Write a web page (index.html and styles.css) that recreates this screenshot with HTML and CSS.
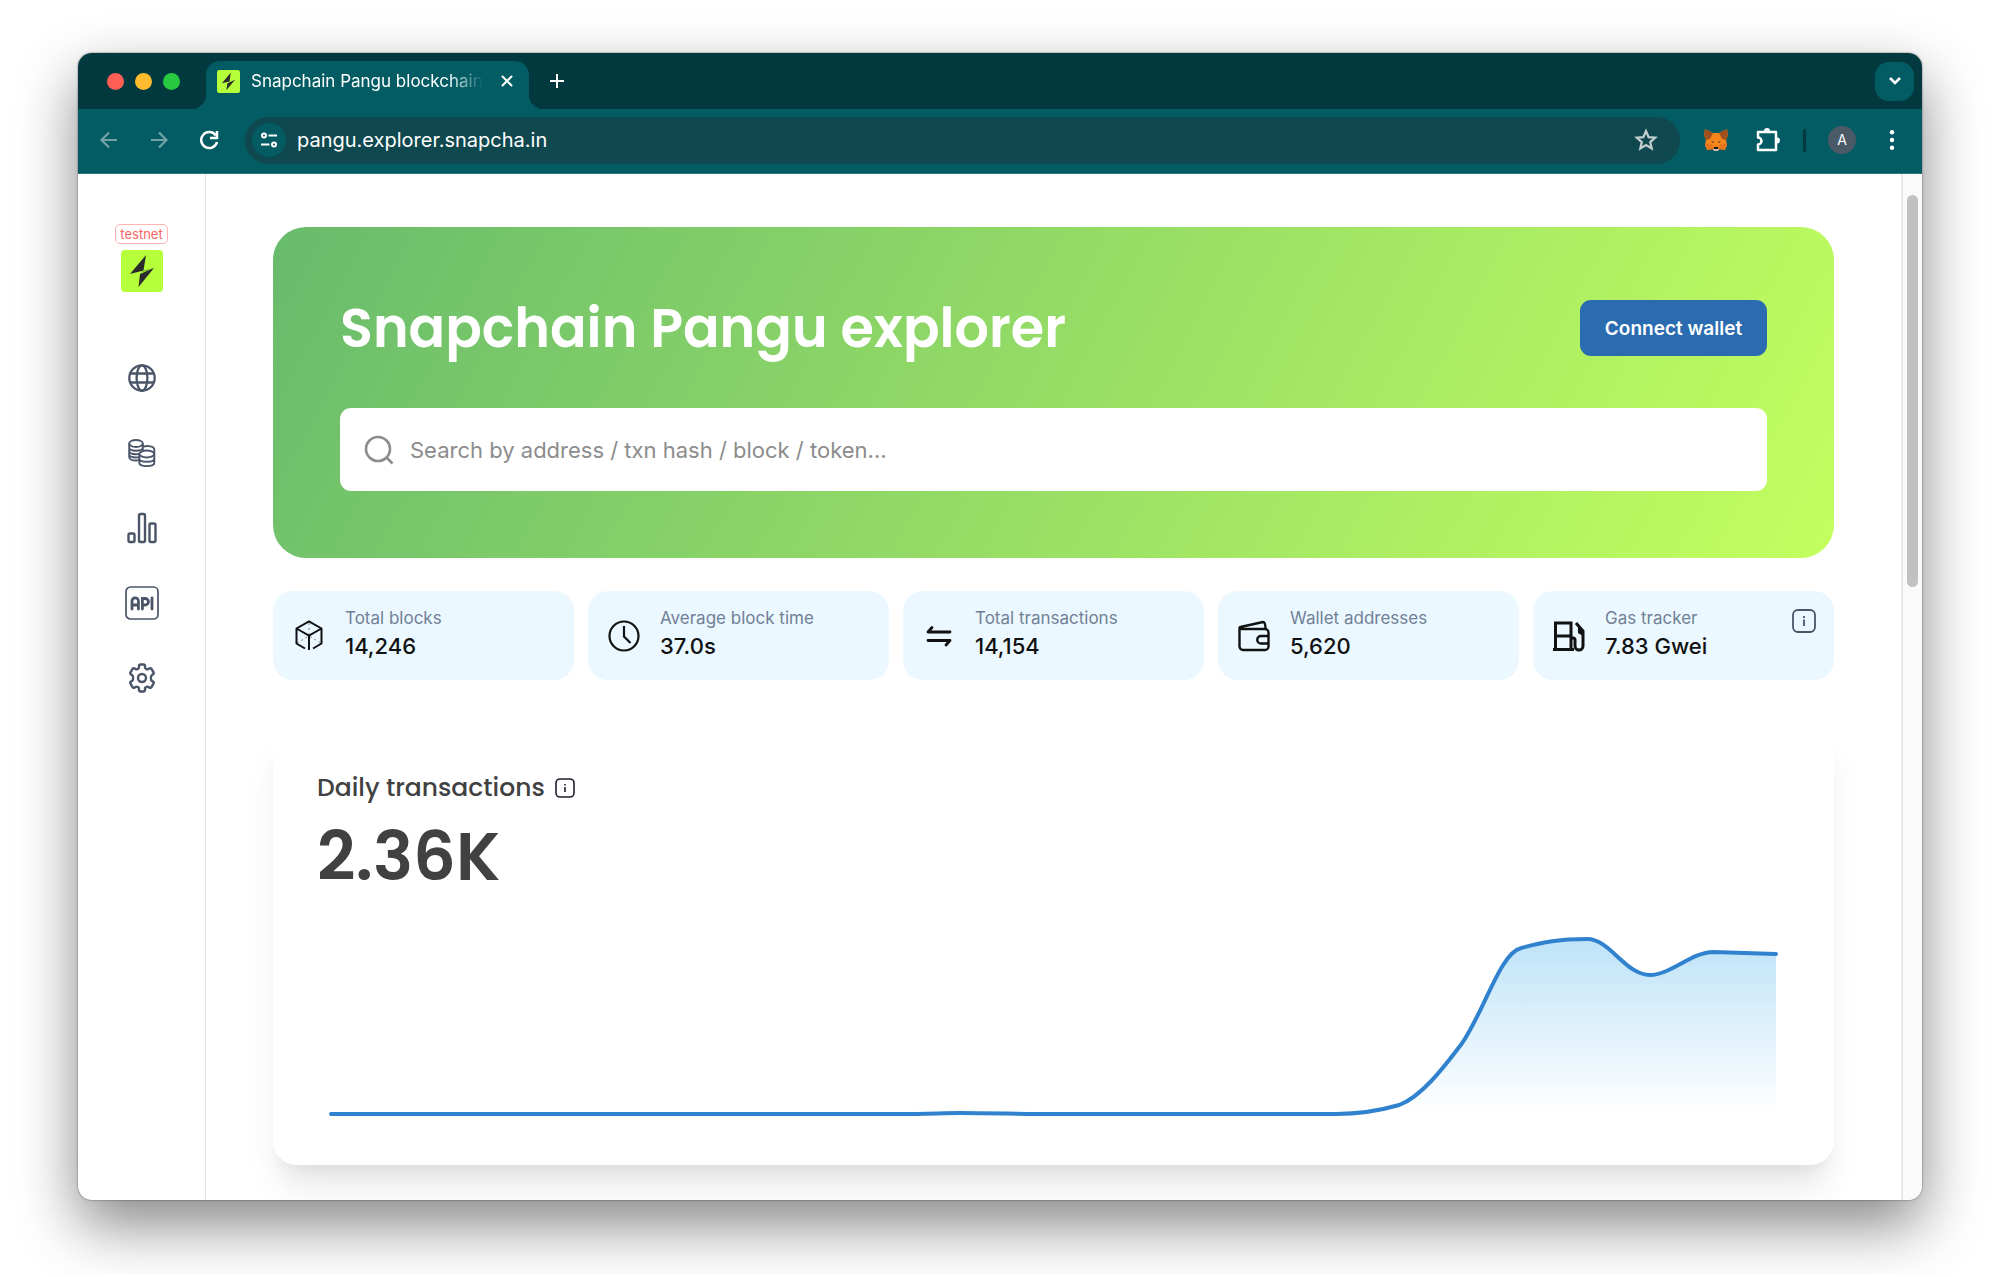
FILE: index.html
```html
<!DOCTYPE html>
<html lang="en">
<head>
    <meta charset="UTF-8">
    <meta name="viewport" content="width=device-width, initial-scale=1.0">
    <title>Snapchain Pangu blockchain explorer</title>
    <link rel="stylesheet" href="styles.css">
</head>
<body>
    <div class="window">
        <header class="tabs">
            <div class="lights">
                <span class="light red"></span>
                <span class="light yellow"></span>
                <span class="light green"></span>
            </div>
            <div class="tab">
                <svg class="favicon" viewBox="0 0 42 42"><rect width="42" height="42" rx="4" fill="#b6ff3b"/><path d="M25 5 9 24l14-3zM33 18 17 37l2-13z" fill="#2b2b2b"/></svg>
                <span class="tab-title">Snapchain Pangu blockchain explorer</span>
                <button class="tab-close" aria-label="Close tab">
                    <svg width="12" height="12" viewBox="0 0 12 12"><path d="M1.500 1.500l9 9M10.500 1.500l-9 9" stroke="#fff" stroke-width="2" stroke-linecap="round"/></svg>
                </button>
            </div>
            <button class="new-tab" aria-label="New tab">
                <svg width="16" height="16" viewBox="0 0 16 16"><path d="M8 1v14M1 8h14" stroke="#fff" stroke-width="2"/></svg>
            </button>
            <button class="tab-search" aria-label="Search tabs">
                <svg width="14" height="10" viewBox="0 0 14 10"><path d="M2 2l5 5 5-5" fill="none" stroke="#fff" stroke-width="2.500"/></svg>
            </button>
        </header>

        <div class="toolbar">
            <div class="nav-buttons">
                <button class="dim" aria-label="Back">
                    <svg width="18" height="18" viewBox="0 0 18 18"><path d="M17 9H2M9 1.500L1.500 9 9 16.500" fill="none" stroke="currentColor" stroke-width="2.200"/></svg>
                </button>
                <button class="dim" aria-label="Forward">
                    <svg width="18" height="18" viewBox="0 0 18 18"><path d="M1 9h15M9 1.500L16.500 9 9 16.500" fill="none" stroke="currentColor" stroke-width="2.200"/></svg>
                </button>
                <button aria-label="Reload">
                    <svg width="20" height="20" viewBox="0 0 20 20"><path d="M16.800 5.500A8 8 0 1 0 18 12" fill="none" stroke="currentColor" stroke-width="2.500"/><path d="M18 1v7h-7" fill="none" stroke="currentColor" stroke-width="2.500"/></svg>
                </button>
            </div>
            <div class="omnibox">
                <span class="site-info">
                    <svg width="18" height="18" viewBox="0 0 18 18" fill="none" stroke="#fff" stroke-width="2"><circle cx="4" cy="4.500" r="2"/><path d="M8.500 4.500H17M1 13.500h8.500"/><circle cx="14" cy="13.500" r="2"/></svg>
                </span>
                <input class="url" type="text" value="pangu.explorer.snapcha.in" aria-label="Address">
                <button class="star" aria-label="Bookmark">
                    <svg width="24" height="24" viewBox="0 0 24 24"><path d="M12 3l2.600 6.100 6.600.600-5 4.400 1.500 6.400L12 17.100l-5.700 3.400 1.500-6.400-5-4.400 6.600-.600z" fill="none" stroke="#c5cdcf" stroke-width="2.200"/></svg>
                </button>
            </div>
            <div class="extensions">
                <svg class="fox" viewBox="0 0 24 24">
                    <path d="M1 1l8 4h6l8-4 1 6-2 5 1 5-2 5-5-1-3 2h-2l-3-2-5 1-2-5 1-5-2-5z" fill="#f6851b"/>
                    <path d="M1 1l8 4-3 6-4 1-2-5zM23 1l-8 4 3 6 4 1 2-5z" fill="#a0501c"/>
                    <path d="M1 16h7l2 5-6 1-3-4zM23 16h-7l-2 5 6 1 3-4z" fill="#e4761b"/>
                    <path d="M7 13l3 1-1 1zM17 13l-3 1 1 1z" fill="#233447"/>
                    <path d="M9 21h6l-1 2h-4z" fill="#d7c1b3"/><path d="M10 19h4v2h-4z" fill="#161616"/>
                </svg>
                <svg class="puzzle" viewBox="0 0 26 26">
                    <path d="M3 5h18v18H3v-5.500a3.500 3.500 0 0 0 0-7z" fill="none" stroke="#fff" stroke-width="2.500" stroke-linejoin="round"/>
                    <path d="M9 4a3 3 0 0 1 6 0zM22 10.500a3 3 0 0 1 0 6z" fill="#fff"/>
                </svg>
                <span class="divider"></span>
                <span class="avatar">A</span>
                <button class="menu" aria-label="Menu">
                    <svg width="6" height="20" viewBox="0 0 6 20" fill="#fff"><circle cx="3" cy="2.300" r="2.200"/><circle cx="3" cy="10" r="2.200"/><circle cx="3" cy="17.700" r="2.200"/></svg>
                </button>
            </div>
        </div>

        <div class="page">
            <nav class="sidebar">
                <span class="network">testnet</span>
                <a href="#" class="logo" aria-label="Snapchain">
                    <svg viewBox="0 0 42 42"><rect width="42" height="42" rx="4" fill="#b6ff3b"/><path d="M25 5 9 24l13.500-3.500zM33 18l-13.500 4.500L24 20.500zM33 18 17.500 37l1.500-13z" fill="#2b2b2b"/></svg>
                </a>
                <ul>
                    <li><a href="#" aria-label="Blockchain">
                        <svg width="28" height="28" viewBox="0 0 28 28" fill="none" stroke="currentColor" stroke-width="2.300"><circle cx="14" cy="14" r="12.700"/><ellipse cx="14" cy="14" rx="5.400" ry="12.700"/><path d="M2.500 9.500h23M2.500 18.500h23"/></svg>
                    </a></li>
                    <li><a href="#" aria-label="Tokens">
                        <svg width="28" height="28" viewBox="0 0 28 28" fill="none" stroke="currentColor" stroke-width="1.900"><ellipse cx="8" cy="4.500" rx="6.800" ry="3.500"/><path d="M1.200 4.500v13.700c0 2 3.200 3.300 6.800 3.300 1.200 0 2-.100 3.200-.400M14.800 4.500v8M1.200 8.500c0 2 3.200 3.200 6.800 3.200s6.800-1.200 6.800-3.200M1.200 12c0 2 3.200 3.200 6.800 3.200 1.200 0 2.500-.200 3.600-.600M1.200 15.300c0 2 3.200 3.200 6.800 3.200 1.200 0 2-.100 3-.400M14.800 7.800c5-1.600 11.500-.500 11.500 2.400v5"/><ellipse cx="18.800" cy="15" rx="7.500" ry="3.500"/><path d="M11.300 15v8.800c0 2 3.200 3.300 7.500 3.300s7.500-1.300 7.500-3.300V15M11.300 19.400c0 2 3.200 3.300 7.500 3.300s7.500-1.300 7.500-3.300"/></svg>
                    </a></li>
                    <li><a href="#" aria-label="Charts">
                        <svg width="30" height="32" viewBox="0 0 30 32" fill="none" stroke="currentColor" stroke-width="2.400"><rect x="1.500" y="21.500" width="6" height="8.500" rx="1.500"/><rect x="12" y="2" width="6" height="28" rx="1.500"/><rect x="22.500" y="11.500" width="6" height="18.500" rx="1.500"/></svg>
                    </a></li>
                    <li><a href="#" aria-label="API">
                        <svg width="34" height="34" viewBox="0 0 34 34" fill="none" stroke="currentColor" stroke-width="1.700"><rect x="1" y="1" width="32" height="32" rx="4.500"/><path d="M7 23v-8a3.200 3.200 0 0 1 6.400 0v8M7 19h6.400M17.400 23V12.500h2.800a3 3 0 0 1 0 6.500h-2.800M27 12V23" stroke-width="2.800" stroke-linecap="round"/></svg>
                    </a></li>
                    <li><a href="#" aria-label="Settings">
                        <svg width="28" height="30" viewBox="0 0 28 30" fill="none" stroke="currentColor" stroke-width="2.400" stroke-linejoin="round"><path d="M12.500 1.500h3a1.500 1.500 0 0 1 1.500 1.500v1.500c0 1 2 2.200 3 1.700l1.500-.800a1.500 1.500 0 0 1 2 .500l2 3.500a1.500 1.500 0 0 1-.500 2l-1 .600c-1.500.900-1.500 5.100 0 6l1 .600a1.500 1.500 0 0 1 .500 2l-2 3.500a1.500 1.500 0 0 1-2 .500l-1.500-.800c-1-.500-3 .700-3 1.700v1.500a1.500 1.500 0 0 1-1.500 1.500h-3a1.500 1.500 0 0 1-1.500-1.500v-1.500c0-1-2-2.200-3-1.700l-1.500.800a1.500 1.500 0 0 1-2-.500l-2-3.500a1.500 1.500 0 0 1 .500-2l1-.600c1.500-.900 1.500-5.100 0-6l-1-.600a1.500 1.500 0 0 1-.500-2l2-3.500a1.500 1.500 0 0 1 2-.500l1.500.800c1 .500 3-.700 3-1.700V3a1.500 1.500 0 0 1 1.500-1.500z"/><circle cx="14" cy="15" r="4"/></svg>
                    </a></li>
                </ul>
            </nav>

            <main>
                <section class="hero">
                    <div class="hero-top">
                        <h1>Snapchain Pangu explorer</h1>
                        <button class="connect">Connect wallet</button>
                    </div>
                    <label class="search">
                        <svg width="30" height="30" viewBox="0 0 30 30" fill="none" stroke="#8c8c8c" stroke-width="2.600"><circle cx="14" cy="14" r="12"/><path d="M22.500 22.500l6 6"/></svg>
                        <input type="text" placeholder="Search by address / txn hash / block / token..." aria-label="Search">
                    </label>
                </section>

                <section class="stats">
                    <div class="stat">
                        <svg width="36" height="36" viewBox="0 0 36 36" fill="none" stroke="#101112" stroke-width="2"><path d="M14 30.500 5.500 25.500V10.500L18 3.500l12.500 7v15l-8.500 5M5.500 10.500 18 17.500l12.500-7M18 17.500V32"/><path d="M18 5v12M6 25l12-7 12 7" stroke-width="1" stroke-dasharray="2 3" opacity=".5"/></svg>
                        <div><span class="label">Total blocks</span><span class="value">14,246</span></div>
                    </div>
                    <div class="stat">
                        <svg width="36" height="36" viewBox="0 0 36 36" fill="none" stroke="#101112" stroke-width="2.200"><circle cx="18" cy="18" r="14.500"/><path d="M18 8v10.500l6.500 6.500"/></svg>
                        <div><span class="label">Average block time</span><span class="value">37.0s</span></div>
                    </div>
                    <div class="stat">
                        <svg width="36" height="36" viewBox="0 0 36 36" fill="none" stroke="#101112" stroke-width="2.800" stroke-linejoin="round" stroke-linecap="round"><path d="M29 14H7l4-4.500M7 22.500h22l-4 4.500"/></svg>
                        <div><span class="label">Total transactions</span><span class="value">14,154</span></div>
                    </div>
                    <div class="stat">
                        <svg width="36" height="36" viewBox="0 0 36 36" fill="none" stroke="#101112" stroke-width="2.400" stroke-linejoin="round"><path d="M3.500 10v18.500a3.500 3.500 0 0 0 3.500 3.500h22a3.500 3.500 0 0 0 3.500-3.500V14.500a3.500 3.500 0 0 0-3.500-3.500H4.500a1 1 0 0 1 0-2L27 4q2.500 0 2.500 7"/><path d="M32.500 18H25a3.500 3.500 0 0 0 0 7.500h7.500"/></svg>
                        <div><span class="label">Wallet addresses</span><span class="value">5,620</span></div>
                    </div>
                    <div class="stat">
                        <svg width="36" height="36" viewBox="0 0 36 36" fill="none" stroke="#101112" stroke-width="3"><path d="M4.500 32V5H20v27M2 31.500h21M5 18h15M20 20h2a2 2 0 0 1 2 2v6a3.500 3.500 0 0 0 8 0V13l-7-8"/><path d="M25 5l7 7v6l-5-3v-6z" fill="#101112" stroke="none"/></svg>
                        <div><span class="label">Gas tracker</span><span class="value">7.83 Gwei</span></div>
                        <button class="info" aria-label="Gas details">
                            <svg width="24" height="24" viewBox="0 0 24 24" fill="none" stroke="#4a5568" stroke-width="1.800"><rect x="1" y="1" width="22" height="22" rx="5"/><path d="M12 10.500V17M12 7v2"/></svg>
                        </button>
                    </div>
                </section>

                <section class="card">
                    <h2>Daily transactions
                        <svg width="20" height="20" viewBox="0 0 20 20" fill="none" stroke="#1a202c" stroke-width="1.600"><rect x="1" y="1" width="18" height="18" rx="4"/><path d="M10 9v5M10 6v1.500"/></svg>
                    </h2>
                    <p class="total">2.36K</p>
                    <svg class="chart" viewBox="0 0 1446 190" preserveAspectRatio="none">
                        <defs>
                            <linearGradient id="fill" x1="0" y1="0" x2="0" y2="1">
                                <stop offset="0" stop-color="#bee3f8"/>
                                <stop offset="1" stop-color="#bee3f8" stop-opacity="0"/>
                            </linearGradient>
                        </defs>
                        <path fill="url(#fill)" d="M0 183H1006C1030 183 1048 180 1069 174C1090 166 1111 140 1132 112C1155 78 1170 22 1191 17C1213 11 1230 8 1257 8C1280 8 1295 44 1320 44C1340 44 1362 21 1383 21L1446 23V178H0z"/>
                        <path class="line" d="M0 183H566C600 183 610 182 629 182C660 182 690 183 720 183H1006C1030 183 1048 180 1069 174C1090 166 1111 140 1132 112C1155 78 1170 22 1191 17C1213 11 1230 8 1257 8C1280 8 1295 44 1320 44C1340 44 1362 21 1383 21L1446 23"/>
                    </svg>
                </section>
            </main>

            <div class="scrollbar"><div class="thumb"></div></div>
        </div>
    </div>
</body>
</html>
```

FILE: styles.css
```css
* {
    box-sizing: border-box;
}
body {
    margin: 0;
    padding: 53px 78px 75px;
    background-color: #fff;
    font-family: Inter, "Liberation Sans", sans-serif;
    color: #101112;
}
button {
    display: flex;
    align-items: center;
    justify-content: center;
    padding: 0;
    border: none;
    background: none;
    color: #fff;
    font-family: inherit;
    cursor: pointer;
}
svg {
    display: block;
    flex-shrink: 0;
}
.window {
    border-radius: 14px;
    overflow: hidden;
    background-color: #fff;
    box-shadow: 0 0 2px rgba(0, 0, 0, 0.6), 0 25px 60px rgba(0, 0, 0, 0.48);
}

/* tab strip */
.tabs {
    display: flex;
    align-items: center;
    height: 56px;
    padding: 0 8px 0 29px;
    background-color: #02393e;
}
.lights {
    display: flex;
    gap: 11px;
    margin-right: 26px;
}
.light {
    width: 17px;
    height: 17px;
    border-radius: 50%;
}
.red {
    background-color: #ff5f57;
}
.yellow {
    background-color: #febc2e;
}
.green {
    background-color: #28c840;
}
.tab {
    position: relative;
    align-self: flex-end;
    display: flex;
    align-items: center;
    width: 323px;
    height: 48px;
    padding: 0 14px 8px 11px;
    border-radius: 14px 14px 0 0;
    background-color: #035c63;
}
.tab::before,
.tab::after {
    content: "";
    position: absolute;
    bottom: 0;
    width: 14px;
    height: 14px;
}
.tab::before {
    left: -14px;
    background: radial-gradient(circle at 0 0, transparent 14px, #035c63 14px);
}
.tab::after {
    right: -14px;
    background: radial-gradient(circle at 100% 0, transparent 14px, #035c63 14px);
}
.favicon {
    width: 23px;
    height: 23px;
}
.tab-title {
    flex: 1;
    margin: 0 16px 0 11px;
    overflow: hidden;
    white-space: nowrap;
    font-size: 17px;
    color: #fff;
    -webkit-mask-image: linear-gradient(to right, #000 85%, transparent);
    mask-image: linear-gradient(to right, #000 85%, transparent);
}
.tab-close {
    width: 16px;
    height: 16px;
}
.new-tab {
    width: 24px;
    height: 24px;
    margin-left: 16px;
}
.tab-search {
    width: 39px;
    height: 39px;
    margin-left: auto;
    border-radius: 14px;
    background-color: #035c63;
}

/* toolbar */
.toolbar {
    display: flex;
    align-items: center;
    height: 65px;
    padding: 0 18px 2px 20px;
    border-bottom: 1px solid #2f7479;
    background-color: #035c63;
}
.nav-buttons {
    display: flex;
    gap: 28px;
    margin-right: 25px;
}
.nav-buttons button {
    width: 22px;
    height: 22px;
}
.nav-buttons .dim {
    color: #74a3a7;
}
.omnibox {
    flex: 1;
    display: flex;
    align-items: center;
    height: 47px;
    padding: 0 22px 0 7px;
    border-radius: 24px;
    background-color: #0f484e;
}
.site-info {
    display: flex;
    align-items: center;
    justify-content: center;
    width: 34px;
    height: 34px;
    margin-right: 11px;
    border-radius: 50%;
    background-color: #035c63;
}
.url {
    flex: 1;
    padding: 0;
    border: none;
    outline: none;
    background: none;
    color: #fff;
    font-family: inherit;
    font-size: 20px;
}
.extensions {
    display: flex;
    align-items: center;
    margin-left: 24px;
}
.fox {
    width: 24px;
    height: 24px;
}
.puzzle {
    width: 26px;
    height: 26px;
    margin-left: 27px;
}
.divider {
    width: 3px;
    height: 23px;
    margin: 0 22px;
    border-radius: 2px;
    background-color: #02393e;
}
.avatar {
    width: 28px;
    height: 28px;
    border-radius: 50%;
    background-color: #4a5a66;
    color: #fff;
    font-size: 14px;
    line-height: 28px;
    text-align: center;
}
.menu {
    width: 24px;
    height: 24px;
    margin-left: 24px;
}

/* page */
.page {
    display: flex;
}
.sidebar {
    display: flex;
    flex-direction: column;
    align-items: center;
    width: 128px;
    padding-top: 50px;
    border-right: 1px solid #e2e2e2;
}
.network {
    height: 20px;
    padding: 0 4px;
    border: 1px solid #feb2b2;
    border-radius: 5px;
    color: #f56565;
    font-size: 13px;
    line-height: 18px;
}
.logo {
    width: 42px;
    margin-top: 6px;
}
.sidebar ul {
    margin: 48px 0 0;
    padding: 0;
    list-style: none;
}
.sidebar li a {
    display: flex;
    align-items: center;
    justify-content: center;
    width: 48px;
    height: 75px;
    color: #4a5568;
}
main {
    flex: 1;
    padding: 53px 67px 35px;
}
.hero {
    padding: 67px;
    border-radius: 33px;
    background: linear-gradient(118deg, #68bb6c 0%, #c4ff5f 100%);
}
.hero-top {
    display: flex;
    align-items: center;
    justify-content: space-between;
    height: 68px;
    margin-bottom: 46px;
}
h1 {
    margin: 0;
    color: #fff;
    font-family: Poppins, Inter, sans-serif;
    font-size: 54px;
    font-weight: 600;
}
.connect {
    width: 187px;
    height: 56px;
    border-radius: 11px;
    background-color: #2b6cb0;
    font-size: 19px;
    font-weight: 600;
}
.search {
    display: flex;
    align-items: center;
    height: 83px;
    padding: 0 24px;
    border-radius: 11px;
    background-color: #fff;
}
.search input {
    flex: 1;
    margin-left: 16px;
    padding: 0;
    border: none;
    outline: none;
    font-family: inherit;
    font-size: 22px;
}
.search input::placeholder {
    color: #8c8c8c;
}
.stats {
    display: grid;
    grid-template-columns: repeat(5, 1fr);
    gap: 14px;
    margin-top: 33px;
}
.stat {
    position: relative;
    display: flex;
    align-items: center;
    gap: 18px;
    height: 89px;
    padding: 0 18px;
    border-radius: 20px;
    background-color: #ebf8ff;
}
.stat div {
    margin-bottom: 8px;
}
.stat span {
    display: block;
    line-height: 28px;
}
.label {
    color: #718096;
    font-size: 17px;
}
.value {
    font-size: 22px;
    font-weight: 500;
}
.info {
    position: absolute;
    top: 18px;
    right: 18px;
}
.card {
    margin-top: 44px;
    padding: 46px 44px 32px;
    border-radius: 24px;
    background-color: #fff;
    box-shadow: 0 27px 33px -7px rgba(0, 0, 0, 0.1), 0 13px 13px -7px rgba(0, 0, 0, 0.04);
}
.card h2 {
    display: flex;
    align-items: center;
    gap: 10px;
    margin: 0;
    color: #414141;
    font-family: Poppins, Inter, sans-serif;
    font-size: 25px;
    font-weight: 500;
    line-height: 36px;
}
.total {
    margin: 12px 0 0;
    color: #414141;
    font-family: Poppins, Inter, sans-serif;
    font-size: 67px;
    font-weight: 600;
    line-height: 78px;
}
.chart {
    width: calc(100% - 28px);
    height: 190px;
    margin: 35px 14px 12px;
    overflow: visible;
}
.line {
    fill: none;
    stroke: #3182ce;
    stroke-width: 4;
    stroke-linecap: round;
    vector-effect: non-scaling-stroke;
}
.scrollbar {
    width: 21px;
    padding: 21px 4px 0;
    border-left: 2px solid #e8e8e8;
    background-color: #fafafa;
}
.thumb {
    width: 11px;
    height: 39%;
    border-radius: 6px;
    background-color: #c1c1c1;
}
```
